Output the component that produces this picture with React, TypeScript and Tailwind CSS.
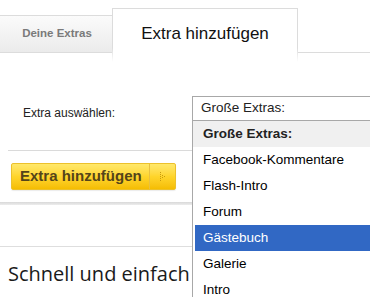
import React from 'react';

const options = ['Facebook-Kommentare', 'Flash-Intro', 'Forum', 'Gästebuch', 'Galerie', 'Intro'];

const App: React.FC = () => {
  return (
    <main className="relative w-[370px] h-[297px] overflow-hidden bg-white font-['Liberation_Sans',Arial,sans-serif]">
      {/* Tabs */}
      <div className="flex items-start h-[62px]">
        <div className="mt-[15px] w-[112px] h-[38px] flex items-center justify-center border-t border-b border-[#dcdcdc] bg-gradient-to-b from-[#fbfbfb] to-[#ebebeb]">
          <span className="text-[11.5px] font-bold text-[#7a7a7a] pl-[2px]">Deine Extras</span>
        </div>
        <div className="relative mt-[8px] w-[186px] h-[54px] border-t border-l border-r border-[#dcdcdc] bg-white flex justify-center pt-[16px]">
          <span className="text-[17px] leading-none text-[#111]">Extra hinzufügen</span>
          <div className="absolute -left-px -right-px bottom-0 h-[14px] bg-gradient-to-b from-transparent to-white"></div>
        </div>
        <div className="flex-1 mt-[8px] h-[45px] border-b border-[#dcdcdc]"></div>
      </div>

      {/* Form row */}
      <div className="pl-[23px] pt-[38px] h-[88px]">
        <span className="text-[12px] text-[#222]">Extra auswählen:</span>
      </div>
      <div className="ml-[8px] h-px bg-[#dadada]"></div>

      {/* Button */}
      <div className="pl-[11px] pt-[12px]">
        <button className="flex items-stretch w-[165px] h-[27px] rounded-[2px] border border-[#ecc12c] bg-gradient-to-b from-[#ffe86a] via-[#ffd52a] to-[#f5bd00] shadow-[0_1px_1px_rgba(0,0,0,0.08)]">
          <span className="flex-1 flex items-center pl-[8px] text-[15px] font-bold text-[#54441a]">Extra hinzufügen</span>
          <span className="w-[26px] border-l border-[#e8c040] flex items-center justify-center">
            <svg width="6" height="10" viewBox="0 0 6 10">
              <g fill="#c79a10">
                <rect x="0" y="0" width="1" height="1" />
                <rect x="0" y="2" width="1" height="1" />
                <rect x="0" y="4" width="1" height="1" />
                <rect x="0" y="6" width="1" height="1" />
                <rect x="0" y="8" width="1" height="1" />
                <rect x="2" y="3" width="1" height="1" />
                <rect x="2" y="5" width="1" height="1" />
                <rect x="4" y="4" width="1" height="1" />
              </g>
            </svg>
          </span>
        </button>
      </div>

      <div className="mt-[12px] h-[3px] bg-gradient-to-b from-[#d8d8d8] to-[#ededed]"></div>
      <div className="mt-[41px] h-px bg-[#dedede]"></div>
      <h2 className="pl-[8px] pt-[17px] text-[20px] leading-none text-[#1a1a1a] font-['Open_Sans','Noto_Sans',sans-serif] whitespace-nowrap">
        Schnell und einfach
      </h2>

      {/* Open select */}
      <div className="absolute left-[192px] top-[96px] w-[190px] bg-white border-l border-[#a8a8a8] text-[13.5px] text-black">
        <div className="h-[25px] border-t border-b border-[#a8a8a8] flex items-center pl-[8px] text-[#222]">Große Extras:</div>
        <div className="h-[26px] bg-[#f0f0f0] flex items-center pl-[10px] font-bold text-[#222]">Große Extras:</div>
        {options.map((o) => (
          <div
            key={o}
            className={
              o === 'Gästebuch'
                ? 'h-[26px] flex items-center pl-[8px] bg-[#3168c4] text-white ml-[2px]'
                : 'h-[26px] flex items-center pl-[10px]'
            }
          >
            {o}
          </div>
        ))}
      </div>
    </main>
  );
};

export default App;
